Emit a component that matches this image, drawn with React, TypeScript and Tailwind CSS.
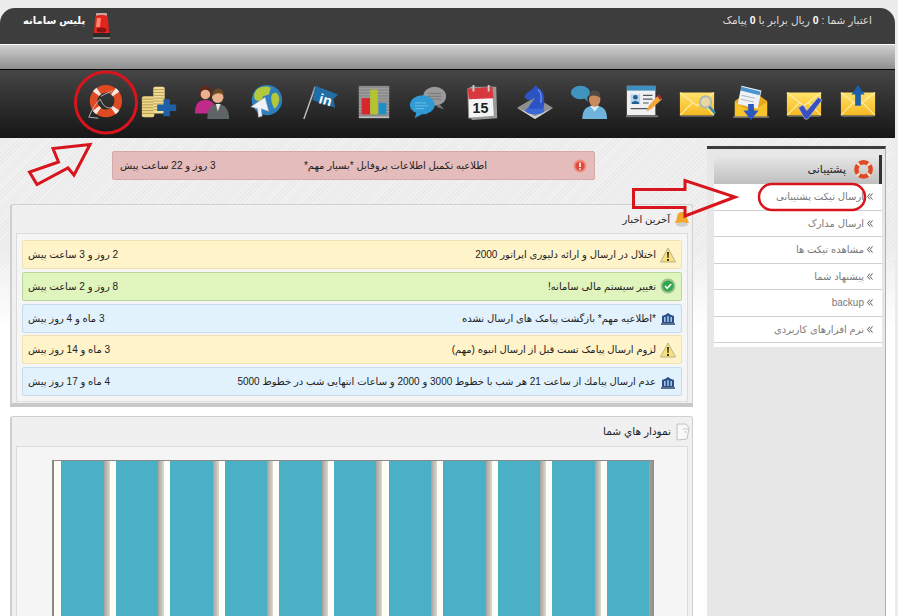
import React from "react";

const Envelope = () => (
    <>
        <defs>
            <linearGradient id="env" x1="0" y1="0" x2="0" y2="1">
                <stop offset="0" stopColor="#ffe36a" />
                <stop offset="1" stopColor="#f6b81e" />
            </linearGradient>
        </defs>
        <rect x="3" y="34" width="34" height="1.5" fill="#777" />
        <rect x="2" y="10" width="36" height="24" rx="1" fill="url(#env)" />
        <path d="M2 10l18 14 18-14M2 34l13-13M38 34L25 21" fill="none" stroke="#ffeeaa" strokeWidth="1.2" />
    </>
);

const LifeBuoy = ({ rope = true }: { rope?: boolean }) => (
    <>
        <circle cx="21" cy="19" r="13" fill="none" stroke="#e04a22" strokeWidth="8" />
        <circle cx="21" cy="19" r="13" fill="none" stroke="#f6e6dc" strokeWidth="8.4" strokeDasharray="4 16.42" strokeDashoffset="-8" />
        {rope && <path d="M3 36c3-8 7-14 12-19 3 8 8 11 14 8M3 36l10 1M16 14c4-3 9-4 12-6" fill="none" stroke="#b8b8b8" strokeWidth="1" />}
    </>
);

const Coins = () => (
    <>
        <rect x="2" y="14" width="13" height="22" rx="2" fill="#ecd588" />
        <path d="M2 17h13M2 20h13M2 23h13M2 26h13M2 29h13M2 32h13" stroke="#a68a3c" strokeWidth="0.8" />
        <rect x="14" y="4" width="12" height="28" rx="2" fill="#f0dc98" />
        <path d="M14 7h12M14 10h12M14 13h12M14 16h12M14 19h12M14 22h12M14 25h12M14 28h12" stroke="#ad9040" strokeWidth="0.8" />
        <path d="M25 19h7v6h7v7h-7v6h-7v-6h-7v-7h7z" fill="#1f5fa8" transform="translate(1 -1) scale(0.95)" />
    </>
);

const People = () => (
    <>
        <path d="M1 32c0-10 4-14 11-14s11 4 11 14z" fill="#c22a8a" />
        <circle cx="12" cy="10" r="7" fill="#5b2a1a" />
        <circle cx="12" cy="12" r="5" fill="#eab08f" />
        <path d="M14 38c0-11 4-16 11-16s12 5 12 16z" fill="#5f6464" />
        <path d="M23 22l2 8 3-8z" fill="#e8e8e8" />
        <circle cx="25" cy="15" r="6" fill="#e9b48f" />
        <path d="M19 14c0-6 3-8 6-8s7 2 6 7c-3-3-8-3-12 1z" fill="#6b4a25" />
    </>
);

const Globe = () => (
    <>
        <circle cx="21" cy="18" r="16" fill="#2e7fc0" />
        <path d="M11 6c5-3 11-3 14-1l-2 7-6 2-2 6-6-2c-3-4-1-9 2-12zM27 11c4-2 6 0 7 5 0 5-2 9-5 11-3-4-5-12-2-16z" fill="#b4c83c" />
        <path d="M19 15L4 25l7 2 1 9 4-1-1-8 8 3z" fill="#eef2f6" stroke="#8a9aa8" strokeWidth="0.6" />
    </>
);

const Flag = () => (
    <>
        <path d="M3 38L15 4" stroke="#b9b9b9" strokeWidth="1.6" />
        <path d="M15 3l24 9-5 5 2 9-24-8z" fill="#1f6ea6" />
        <text direction="ltr" x="18" y="21" fontSize="15" fontWeight="700" fontFamily="Liberation Sans" fill="#fff" transform="rotate(16 18 21)">in</text>
    </>
);

const Bars = () => (
    <>
        <rect x="4" y="3" width="32" height="32" fill="#8c8c8c" />
        <path d="M4 6h32M4 9h32M4 12h32M4 15h32M4 18h32M4 21h32M4 24h32M4 27h32M4 30h32" stroke="#a8a8a8" strokeWidth="0.8" />
        <path d="M4 35h32v2H4z" fill="#c4c4c4" />
        <rect x="7" y="16" width="9" height="17" fill="#d8262c" />
        <rect x="16" y="7" width="8" height="26" fill="#b4c430" />
        <rect x="25" y="21" width="8" height="12" fill="#1c8ec8" />
    </>
);

const Chat = () => (
    <>
        <ellipse cx="27" cy="14" rx="12" ry="10" fill="#9a9a9a" />
        <path d="M20 14h14M20 17h14M20 11h14" stroke="#777" strokeWidth="1" />
        <path d="M32 22l5 6-8-3z" fill="#777" />
        <ellipse cx="14" cy="23" rx="13" ry="10" fill="#2f9ad4" />
        <path d="M8 30l-2 7 9-5z" fill="#2f9ad4" />
        <path d="M6 21h12M6 24h14M6 27h10" stroke="#6fbde6" strokeWidth="1" />
    </>
);

const Calendar = () => (
    <>
        <path d="M7 4l28 0 1 33-27 2z" fill="#9a9a9a" />
        <path d="M5 6l26-2 2 31-27 2z" fill="#f4f4f4" stroke="#8a8a8a" strokeWidth="0.8" />
        <path d="M5 6l26-2 1 12-26 1z" fill="#d8393f" />
        <path d="M11 2v7M27 2v7" stroke="#ccc" strokeWidth="2" />
        <text direction="ltr" x="10" y="32" fontSize="15" fontWeight="700" fontFamily="Liberation Sans" fill="#222">15</text>
    </>
);

const Knight = () => (
    <>
        <path d="M1 26l19-11 19 11-19 12z" fill="#8f8f8f" />
        <path d="M1 26l19 12 19-12-19 9z" fill="#d4d4d4" />
        <ellipse cx="20" cy="29" rx="10" ry="4" fill="#3a6ad8" />
        <path d="M21 2l2 3c6 2 8 10 6 22H13c1-5 5-7 7-12-3 2-6 4-8 3l-3-3c0-2 3-5 6-7 2-2 4-3 6-6z" fill="#2b53c4" />
        <path d="M23 7c3 2 4 8 3 14" fill="none" stroke="#7f9ef0" strokeWidth="1.2" />
    </>
);

const Support = () => (
    <>
        <ellipse cx="11" cy="10" rx="10" ry="7" fill="#3f95bf" />
        <path d="M15 16l4 4-1-5z" fill="#3f95bf" />
        <path d="M13 38c0-10 4-14 13-14s13 4 13 14z" fill="#6eb4dc" />
        <path d="M21 24l5 6 5-6z" fill="#d8ecf8" />
        <ellipse cx="26" cy="17" rx="6" ry="8" fill="#c98a5d" />
        <path d="M20 15c0-5 3-8 7-7 4 0 5 4 5 8-3-3-8-4-12-1z" fill="#4f4a45" />
    </>
);

const Card = () => (
    <>
        <rect x="3" y="3" width="30" height="31" fill="#eef0f2" />
        <rect x="3" y="3" width="30" height="5" fill="#3f8fc0" />
        <rect x="7" y="12" width="10" height="10" fill="#b8d4e8" />
        <circle cx="12" cy="15" r="2.4" fill="#1e5f94" />
        <path d="M8 22c0-4 8-4 8 0z" fill="#1e5f94" />
        <path d="M20 13h10M20 17h10M20 21h6M7 27h18" stroke="#555" strokeWidth="1.2" />
        <rect x="2" y="34" width="34" height="2" fill="#777" />
        <path d="M24 30l2-6 10-11 4 4-11 10z" fill="#f2a838" />
        <path d="M35 14l2-2 3 4-2 2z" fill="#a52a2a" />
    </>
);

const EnvelopeSearch = () => (
    <>
        <Envelope />
        <circle cx="29" cy="20" r="6" fill="#e8d7a0" stroke="#a9b9b8" strokeWidth="2" />
        <path d="M33 25l6 7" stroke="#3a8fb0" strokeWidth="2.6" />
    </>
);

const EnvelopeDown = () => (
    <>
        <path d="M3 19L20 7l17 12v17H3z" fill="#e8a720" />
        <path d="M10 3l21 5-4 19-21-5z" fill="#eef2f6" />
        <path d="M10 4l20 5-1 4-20-5z" fill="#4a94d0" />
        <path d="M10 13l14 3M9 17l14 3" stroke="#a8b4c0" strokeWidth="1" />
        <path d="M3 20l17 11 17-11v16H3z" fill="#f8c42c" />
        <rect x="1" y="35" width="38" height="1.6" fill="#777" />
        <path d="M17 22h6v7h5l-8 10-8-10h5z" fill="#2a58c0" />
    </>
);

const EnvelopeCheck = () => (
    <>
        <Envelope />
        <path d="M14 26l5-3 4 6L35 15l4 3-15 20h-3z" fill="#3950c0" stroke="#cdd3f0" strokeWidth="0.6" />
    </>
);

const EnvelopeUp = () => (
    <>
        <Envelope />
        <path d="M17 24v-12h-4l7-10 7 10h-4v12z" fill="#1f5ea8" />
    </>
);

const Siren = () => (
    <svg width="17" height="26" viewBox="0 0 17 26">
        <rect x="3" y="0" width="11" height="3" rx="1" fill="#c9a6a0" />
        <path d="M2 6c0-3 2-4 6.500-4S15 3 15 6l1 14H1z" fill="#e8231c" />
        <path d="M4 5h4l-1 9H3z" fill="#ff8a70" />
        <ellipse cx="8.500" cy="17" rx="5" ry="2.500" fill="#8a1410" />
        <rect x="0" y="20" width="17" height="5" fill="#2a2a2a" />
        <rect x="0" y="24.500" width="17" height="1" fill="#cfcfcf" />
    </svg>
);

const toolbarIcons = [
    EnvelopeUp,
    EnvelopeCheck,
    EnvelopeDown,
    EnvelopeSearch,
    Card,
    Support,
    Knight,
    Calendar,
    Chat,
    Bars,
    Flag,
    Globe,
    People,
    Coins,
    LifeBuoy,
];

const WarnIcon = () => (
    <svg width="16" height="16" viewBox="0 0 16 16" className="shrink-0">
        <path d="M8 1l7.500 14H.5z" fill="#f9e27a" stroke="#a9a58c" strokeWidth="0.8" />
        <path d="M7 5h2l-.4 6H7.400zM7 12h2v2H7z" fill="#3a3420" />
    </svg>
);

const OkIcon = () => (
    <svg width="16" height="16" viewBox="0 0 16 16" className="shrink-0">
        <circle cx="8" cy="8" r="7.500" fill="#9ebf96" />
        <circle cx="8" cy="8" r="5.600" fill="#2fa84a" />
        <path d="M5 8l2.200 2.300L11.200 6" fill="none" stroke="#fff" strokeWidth="1.600" />
    </svg>
);

const NewsIcon = () => (
    <svg width="16" height="16" viewBox="0 0 16 16" className="shrink-0">
        <path d="M2 13V6l3-1 3-2 3 2 3 1v7z" fill="#2a4c88" />
        <path d="M4 7h1.600v5H4zM7.200 6h1.600v6H7.200zM10.400 7H12v5h-1.600z" fill="#9cc4e8" />
        <rect x="1" y="13" width="14" height="2" fill="#5d6f90" />
    </svg>
);

const newsRows = [
    { type: "warn", text: "اختلال در ارسال و ارائه دلیوری اپراتور 2000", time: "2 روز و 3 ساعت پیش" },
    { type: "ok", text: "تغییر سیستم مالی سامانه!", time: "8 روز و 2 ساعت پیش" },
    { type: "info", text: "*اطلاعیه مهم* بازگشت پیامک های ارسال نشده", time: "3 ماه و 4 روز پیش" },
    { type: "warn", text: "لزوم ارسال پیامک تست قبل از ارسال انبوه (مهم)", time: "3 ماه و 14 روز پیش" },
    { type: "info", text: "عدم ارسال پیامك از ساعت 21 هر شب با خطوط 3000 و 2000 و ساعات انتهایی شب در خطوط 5000", time: "4 ماه و 17 روز پیش" },
];

const rowStyles: Record<string, string> = {
    warn: "bg-[#fff3c9] border-[#f0e2b0]",
    ok: "bg-[#e0f5bd] border-[#bcd6a0]",
    info: "bg-[#e1f2fd] border-[#c4dcee]",
};

const menuItems = ["ارسال تیکت پشتیبانی", "ارسال مدارک", "مشاهده تیکت ها", "پیشنهاد شما", "backup", "نرم افزارهای کاربردی"];

const DoubleChevron = () => (
    <svg width="6" height="7" viewBox="0 0 6 7" className="shrink-0">
        <path d="M3 .5L.5 3.500 3 6.500M5.500 .5L3 3.500l2.500 3" fill="none" stroke="#555" strokeWidth="1" />
    </svg>
);

const bars = Array.from({ length: 11 }, (_, i) => i);

export default function App() {
    return (
        <div
            dir="rtl"
            className="relative w-[898px] h-[616px] overflow-hidden bg-[#ececec] pt-2 pr-[3px] font-['Liberation_Sans','DejaVu_Sans',sans-serif] text-[10px] text-[#222]"
        >
            <div className="w-[895px] h-[608px] flex flex-col">
                <header className="h-[37px] shrink-0 rounded-t-[15px] bg-[#3d3d3d] border-b border-white flex justify-between items-start pt-[5px] pr-[23px] pl-[23px] text-[#dcdcdc]">
                    <div className="text-[10.500px]">
                        اعتبار شما : <b className="text-white">0</b> ریال برابر با <b className="text-white">0</b> پیامک
                    </div>
                    <div className="flex items-start gap-[8px] font-bold text-white">
                        <Siren />
                        <span>پلیس سامانه</span>
                    </div>
                </header>
                <div className="h-[25px] shrink-0 bg-gradient-to-b from-[#d0d0d0] to-[#8f8f8f] border-b border-black" />
                <nav className="h-[68px] shrink-0 bg-gradient-to-b from-[#464646] to-[#171717] flex items-center pr-[10px] pb-[4px]">
                    {toolbarIcons.map((Icon, i) => (
                        <div key={i} className="w-[53.800px] flex justify-center">
                            <svg width="38" height="38" viewBox="0 0 40 40">
                                <Icon />
                            </svg>
                        </div>
                    ))}
                </nav>
                <div className="flex-1 min-h-0 flex gap-[14px] px-[10px] pt-2 bg-[linear-gradient(to_bottom,transparent_110px,white_190px),repeating-linear-gradient(135deg,#f3f3f3_0,#f3f3f3_1px,#ebebeb_1px,#ebebeb_3px)]">
                    <aside className="w-[179px] -mr-[1px] shrink-0 bg-[#e7e7e7] border-t-[3px] border-t-[#3c3c3c] border-r border-r-[#b5aeae] pt-[6px] px-[3px]">
                        <div className="ml-[4px]">
                            <div className="h-[29px] flex items-center gap-[6px] pr-[5px] bg-gradient-to-b from-[#e8e8e8] to-[#bfbfbf] border-r-[3px] border-[#333] text-[11px]">
                                <svg width="22" height="22" viewBox="0 0 40 40" className="shrink-0">
                                    <LifeBuoy rope={false} />
                                </svg>
                                <span className="text-[#222]">پشتیبانی</span>
                            </div>
                            <ul className="bg-white pb-[4px]">
                                {menuItems.map((item) => (
                                    <li key={item} className="h-[26.500px] flex items-center gap-[3px] pr-[9px] border-b border-[#cfcfcf] text-[#7a7a7a]">
                                        <DoubleChevron />
                                        <span>{item}</span>
                                    </li>
                                ))}
                            </ul>
                        </div>
                    </aside>
                    <main className="w-[683px] shrink-0">
                        <div className="mt-[5px] mr-[98px] w-[483px] h-[29px] flex items-center justify-between pr-[7px] pl-[7px] bg-[#e5bcbc] border border-[#d6a9a9] rounded-[2px]">
                            <div className="flex items-center">
                                <svg width="14" height="14" viewBox="0 0 14 14" className="shrink-0">
                                    <circle cx="7" cy="7" r="6.500" fill="#ef8c7a" />
                                    <circle cx="7" cy="7" r="4.600" fill="#e04a3c" />
                                    <path d="M6.200 3.400h1.600v4.600H6.200zM6.200 9h1.600v1.600H6.200z" fill="#fff" />
                                </svg>
                                <span className="mr-[86px]">اطلاعیه تکمیل اطلاعات پروفایل *بسیار مهم*</span>
                            </div>
                            <span>3 روز و 22 ساعت پیش</span>
                        </div>
                        <section className="mt-[24px] h-[203px] px-[4px] rounded-t-[3px] bg-[#f0f0f0] border border-[#d0d0d0] border-b-[4px] border-b-[#c8c8c8] border-l-[2px] border-l-[#cfcfcf]">
                            <div className="h-[28px] flex items-center gap-[3px] -mr-[3px]">
                                <svg width="18" height="18" viewBox="0 0 18 18" className="shrink-0">
                                    <path d="M9 2c3 0 5 2 5 6l2 5H2l2-5c0-4 2-6 5-6z" fill="#f1a72e" />
                                    <ellipse cx="9" cy="14.500" rx="6" ry="2.200" fill="#cfcfcf" />
                                </svg>
                                <span>آخرین اخبار</span>
                            </div>
                            <div className="h-[169px] bg-[#f5f5f5] border border-[#dcdcdc] px-[5px] pt-[6px] flex flex-col gap-[2.750px]">
                                {newsRows.map((row, i) => (
                                    <div key={i} className={`h-[29px] shrink-0 flex items-center justify-between px-[5px] border rounded-[2px] ${rowStyles[row.type]}`}>
                                        <div className="flex items-center gap-[4px]">
                                            {row.type === "warn" && <WarnIcon />}
                                            {row.type === "ok" && <OkIcon />}
                                            {row.type === "info" && <NewsIcon />}
                                            <span>{row.text}</span>
                                        </div>
                                        <span>{row.time}</span>
                                    </div>
                                ))}
                            </div>
                        </section>
                        <section className="mt-[9px] h-[260px] px-[4px] rounded-t-[3px] bg-[#f0f0f0] border border-[#d0d0d0] border-l-[2px] border-l-[#cfcfcf]">
                            <div className="h-[29px] flex items-center gap-[5px] -mr-[2px] text-[10.500px]">
                                <svg width="14" height="18" viewBox="0 0 14 18" className="shrink-0">
                                    <path d="M1 1h9l3 4-2 11-10 1z" fill="#f8f8f8" stroke="#b5b5b5" strokeWidth="0.8" />
                                    <path d="M7 6h5M8 9h3" stroke="#bbb" strokeWidth="0.8" />
                                </svg>
                                <span>نمودار هاي شما</span>
                            </div>
                            <div dir="ltr" className="h-[200px] bg-[#f5f5f5] border border-[#dcdcdc] pt-[13px] pl-[35px]">
                                <div className="w-[602px] h-[180px] flex bg-[#fffdf8] border-t border-[#8a8a8a] border-l-2 border-l-[#8a8a80] pl-[7px]">
                                    {bars.map((i) => (
                                        <div key={i} className={`flex h-full shrink-0 ${i < 10 ? "w-[54.600px]" : "w-[47px]"}`}>
                                            <div className="w-[42.500px] bg-[#4ab0c6]" />
                                            <div className={`bg-gradient-to-r from-[#a5a29c] ${i < 10 ? "w-[6px] to-[#dbd9d2]" : "w-[4.500px] to-[#8f8c86]"}`} />
                                        </div>
                                    ))}
                                </div>
                            </div>
                        </section>
                    </main>
                </div>
            </div>

            {/* red marks drawn over the page */}
            <svg width="898" height="616" className="absolute left-0 top-0 pointer-events-none">
                <circle cx="106" cy="102.500" r="30.500" fill="none" stroke="#d8141c" strokeWidth="3" />
                <path d="M90 144.500L53 148.500 58.500 162 29.500 172 37 184.500 68 168 74 175z" fill="none" stroke="#d8141c" strokeWidth="3" />
                <path d="M633.500 189.500H685V180.500L735 197 685 216V207.500H633.500z" fill="none" stroke="#d8141c" strokeWidth="3" />
                <rect x="759" y="184" width="106" height="26" rx="13" fill="none" stroke="#d8141c" strokeWidth="2.500" />
            </svg>
        </div>
    );
}
